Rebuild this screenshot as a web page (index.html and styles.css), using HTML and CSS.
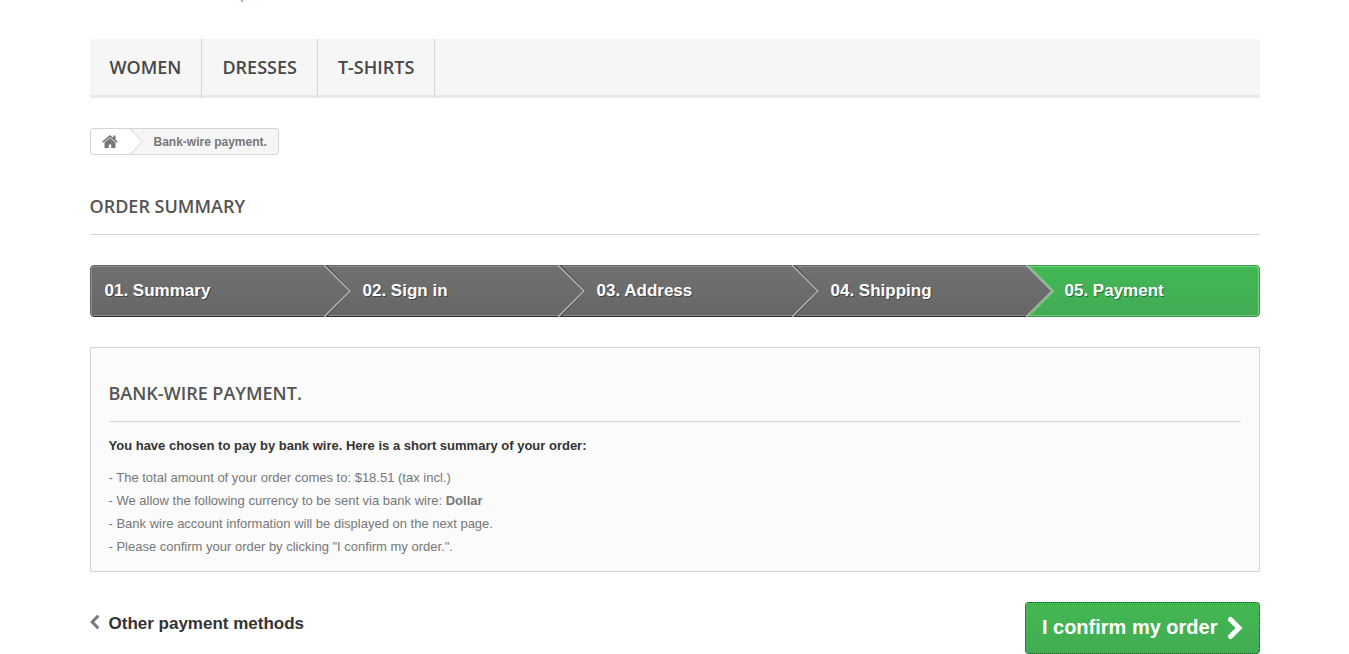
FILE: index.html
```html
<!DOCTYPE html>
<html lang="en">
<head>
<meta charset="utf-8">
<meta name="viewport" content="width=device-width, initial-scale=1">
<title>Order summary</title>
<link rel="stylesheet" href="styles.css">
</head>
<body>
<div class="container">
  <header class="header">
    <p class="tagline">a new experience</p>
  </header>

  <nav class="menu" aria-label="Categories">
    <a class="menu-link" href="#">WOMEN</a>
    <a class="menu-link" href="#">DRESSES</a>
    <a class="menu-link" href="#">T-SHIRTS</a>
  </nav>

  <nav class="breadcrumb" aria-label="Breadcrumb">
    <a class="home" href="#" aria-label="Home">
      <svg class="home-icon" width="16" height="13" viewBox="0 0 16 13" aria-hidden="true"><path d="M8 3 2.500 7.500v4.700q0 .8.800.8h3.500V9.500h2.400V13h3.500q.8 0 .8-.8V7.500z"/><path d="M8 0 .2 6.500l1 1.200L8 2.200l6.800 5.500 1-1.200-2.300-1.900V.4h-2.200v2.400z"/></svg>
    </a>
    <svg class="crumb-arrow" width="14" height="25" viewBox="0 0 14 25" aria-hidden="true"><path class="crumb-fill" d="M0 0 12.500 12.500 0 25z"/><path class="crumb-line" d="M.5 0 12.500 12.500.5 25"/></svg>
    <span class="crumb-text">Bank-wire payment.</span>
  </nav>

  <h1 class="heading">ORDER SUMMARY</h1>

  <ol class="steps">
    <li class="step"><a href="#">01. Summary</a></li>
    <li class="step"><svg class="step-arrow" width="29" height="52" viewBox="0 0 29 52" aria-hidden="true"><path class="arrow-edge" d="M3.500 1 28 26 3.500 51"/><path class="arrow-dark" d="M1.500 0 26.500 26 1.500 52"/><path class="arrow-light" d="M0 0 26 26 0 52"/></svg><a href="#">02. Sign in</a></li>
    <li class="step"><svg class="step-arrow" width="29" height="52" viewBox="0 0 29 52" aria-hidden="true"><path class="arrow-edge" d="M3.500 1 28 26 3.500 51"/><path class="arrow-dark" d="M1.500 0 26.500 26 1.500 52"/><path class="arrow-light" d="M0 0 26 26 0 52"/></svg><a href="#">03. Address</a></li>
    <li class="step"><svg class="step-arrow" width="29" height="52" viewBox="0 0 29 52" aria-hidden="true"><path class="arrow-edge" d="M3.500 1 28 26 3.500 51"/><path class="arrow-dark" d="M1.500 0 26.500 26 1.500 52"/><path class="arrow-light" d="M0 0 26 26 0 52"/></svg><a href="#">04. Shipping</a></li>
    <li class="step current" aria-current="step"><svg class="step-arrow" width="29" height="52" viewBox="0 0 29 52" aria-hidden="true"><defs><linearGradient id="done" x1="0" y1="0" x2="0" y2="1"><stop offset="0" stop-color="#727171"/><stop offset="1" stop-color="#666"/></linearGradient></defs><path fill="url(#done)" d="M0 0 26 26 0 52z"/><path class="arrow-edge" d="M3.500 1 28 26 3.500 51"/><path class="arrow-light" d="M0 0 26 26 0 52"/></svg><span>05. Payment</span></li>
  </ol>

  <form class="payment">
    <section class="box">
      <h2 class="heading box-heading">BANK-WIRE PAYMENT.</h2>
      <p class="lead">You have chosen to pay by bank wire. Here is a short summary of your order:</p>
      <p class="line">- The total amount of your order comes to: $18.51 (tax incl.)</p>
      <p class="line">- We allow the following currency to be sent via bank wire: <strong>Dollar</strong></p>
      <p class="line">- Bank wire account information will be displayed on the next page.</p>
      <p class="line">- Please confirm your order by clicking "I confirm my order.".</p>
    </section>
    <div class="actions">
      <a class="back" href="#"><svg class="back-icon" width="11" height="16" viewBox="0 0 11 16" aria-hidden="true"><path d="M8.300 1.800 2.200 8l6.100 6.200"/></svg>Other payment methods</a>
      <button class="confirm" type="button">I confirm my order<svg class="confirm-icon" width="16" height="24" viewBox="0 0 16 24" aria-hidden="true"><path d="M3.500 3.500 12 12l-8.500 8.500"/></svg></button>
    </div>
  </form>
</div>
</body>
</html>
```
FILE: styles.css
```css
* { box-sizing: border-box; }
body {
  margin: 0;
  background: #fff;
  color: #777;
  font: 13px/18px "Liberation Sans", Arial, sans-serif;
}
a { color: inherit; text-decoration: none; }
svg { display: block; fill: none; }
h1, h2, p, ol { margin: 0; padding: 0; }
.container { max-width: 1170px; margin: 0 auto; }

.header { height: 39px; overflow: hidden; }
.tagline { margin-top: -13px; padding-left: 99px; line-height: 16px; }

.menu {
  display: flex;
  height: 59px;
  background: #f6f6f6;
  box-shadow: inset 0 -3px #e9e9e9;
}
.menu-link {
  padding: 17px 20px 0;
  border-right: 1px solid #d6d4d4;
  color: #484848;
  font: 600 18px/22px "Open Sans", sans-serif;
}

.breadcrumb {
  display: inline-flex;
  height: 27px;
  margin-top: 30px;
  overflow: hidden;
  border: 1px solid #d6d4d4;
  border-radius: 3px;
  background: #f6f6f6;
  vertical-align: top;
  font-weight: bold;
  font-size: 12px;
  line-height: 26px;
}
.home { padding: 6px 12px 0 11px; background: #fff; }
.home-icon { fill: #777; }
.crumb-fill { fill: #fff; }
.crumb-line { stroke: #d6d4d4; }
.crumb-text { padding: 0 11px 0 10px; }

.heading {
  margin-top: 40px;
  padding-bottom: 17px;
  border-bottom: 1px solid #d6d4d4;
  color: #555454;
  font: 600 18px/22px "Open Sans", sans-serif;
}

.steps {
  display: flex;
  height: 52px;
  margin-top: 30px;
  overflow: hidden;
  border-radius: 4px;
  list-style: none;
  color: #fff;
  font-weight: bold;
  font-size: 17px;
  line-height: 50px;
}
.step {
  display: flex;
  flex: 0 0 20%;
  border-top: 1px solid #666;
  border-bottom: 1px solid #2e2e2e;
  background: linear-gradient(#727171, #666);
  box-shadow: inset 0 1px #8b8a8a, inset 0 -1px #8b8a8a;
  text-shadow: 1px 1px rgba(0, 0, 0, 0.4);
}
.step:first-child {
  padding-left: 14px;
  border-left: 1px solid #666;
  border-radius: 4px 0 0 4px;
  box-shadow: inset 1px 1px #8b8a8a, inset 0 -1px #8b8a8a;
}
.step-arrow { flex: none; margin: -1px 10px 0 0; }
.arrow-dark { stroke: #484848; stroke-width: 2; }
.arrow-light { stroke: #b8b8b8; stroke-width: 1.4; }
.arrow-edge { stroke: #858484; }
.current {
  border-color: #399b49;
  border-right: 1px solid #399b49;
  border-radius: 0 4px 4px 0;
  background: linear-gradient(#42b856, #43ab54);
  box-shadow: inset -1px 1px #74d578, inset 0 -1px #74c776;
}
.current .arrow-edge { stroke: #74d578; }

.box {
  margin-top: 30px;
  padding: 0 18px 13px;
  border: 1px solid #d6d4d4;
  background: #fbfbfb;
}
.box-heading { margin-top: 34px; }
.lead { margin: 15px 0 11px; color: #333; font-weight: bold; }
.line { line-height: 23px; }

.actions { display: flex; justify-content: space-between; align-items: flex-start; margin-top: 30px; }
.back {
  display: flex;
  gap: 8px;
  padding-top: 11px;
  color: #333;
  font-weight: bold;
  font-size: 17px;
  line-height: 22px;
}
.back-icon { margin-top: 1px; stroke: #777; stroke-width: 3; }
.confirm {
  display: flex;
  align-items: center;
  gap: 9px;
  height: 52px;
  padding: 0 16px 2px;
  border: 1px dotted #124d1b;
  border-radius: 4px;
  background: linear-gradient(#43b754, #42ac52);
  background-origin: border-box;
  color: #fff;
  font: bold 20px/24px "Liberation Sans", Arial, sans-serif;
}
.confirm-icon {
  margin-top: 2px;
  stroke: #fff;
  stroke-width: 5;
  stroke-linecap: round;
}
```
